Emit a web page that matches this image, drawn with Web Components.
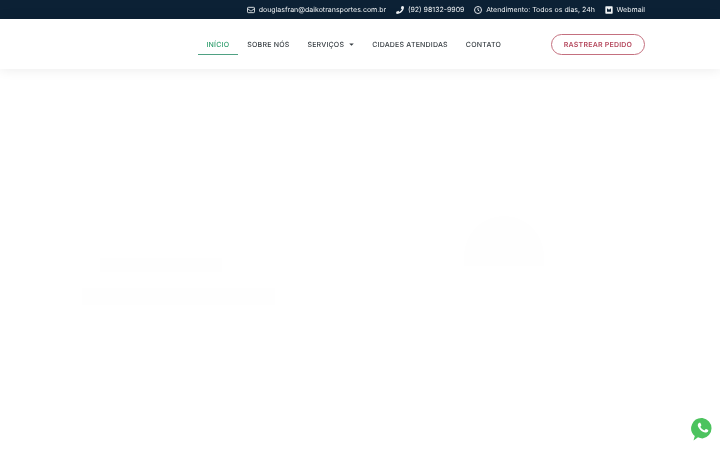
<!DOCTYPE html>
<html lang="pt-BR">
<head>
<meta charset="utf-8">
<title>Daiko Transportes</title>
<style>
    html, body { margin: 0; height: 100%; background: #fff; overflow: hidden; }
    body { font-family: "Inter", "Liberation Sans", sans-serif; text-rendering: geometricPrecision; }
</style>
</head>
<body>
<site-topbar>
    <top-item icon="mail">douglasfran@daikotransportes.com.br</top-item>
    <top-item icon="phone">(92) 98132-9909</top-item>
    <top-item icon="clock">Atendimento: Todos os dias, 24h</top-item>
    <top-item icon="webmail">Webmail</top-item>
</site-topbar>
<site-header>
    <nav-link active>INÍCIO</nav-link>
    <nav-link>SOBRE NÓS</nav-link>
    <nav-link caret>SERVIÇOS</nav-link>
    <nav-link>CIDADES ATENDIDAS</nav-link>
    <nav-link>CONTATO</nav-link>
    <track-button slot="action">RASTREAR PEDIDO</track-button>
</site-header>
<hero-ghost></hero-ghost>
<whats-float></whats-float>

<script>
const topIcons = {
    mail: '<svg width="8" height="8" viewBox="0 0 24 24" fill="none" stroke="currentColor" stroke-width="2.6"><rect x="1.500" y="4" width="21" height="16" rx="2.500"/><path d="M2 8l8 6.200c1.200.9 2.800.9 4 0L22 8"/></svg>',
    phone: '<svg width="8" height="8" viewBox="0 0 24 24" fill="currentColor"><path d="M23 17l-5.300-2.300c-.5-.2-1-.1-1.300.3l-2.300 2.900C10.500 16.100 7.900 13.500 6.100 9.900L9 7.600c.4-.3.5-.8.3-1.300L7 1C6.800.5 6.200.2 5.700.3L.9 1.400C.4 1.500 0 2 0 2.500 0 14.400 9.600 24 21.500 24c.5 0 1-.4 1.100-.9l1.100-4.800c.1-.5-.2-1.100-.7-1.300z" transform="matrix(-1 0 0 1 24 0)"/></svg>',
    clock: '<svg width="8" height="8" viewBox="0 0 24 24" fill="none" stroke="currentColor" stroke-width="2.800"><circle cx="12" cy="12" r="10.500"/><path d="M12 6v6.500l4 2.500"/></svg>',
    webmail: '<svg width="8" height="8" viewBox="0 0 24 24"><path fill="currentColor" fill-rule="evenodd" d="M3 1h18a2 2 0 0 1 2 2v18a2 2 0 0 1-2 2H3a2 2 0 0 1-2-2V3a2 2 0 0 1 2-2zm3 6v10h12V7l-6 4.500z"/></svg>'
};

class SiteTopbar extends HTMLElement {
    constructor() {
        super();
        this.attachShadow({mode: 'open'}).innerHTML = `
        <style>
            :host {
                display: flex;
                justify-content: flex-end;
                align-items: center;
                gap: 9.700px;
                box-sizing: border-box;
                height: 19px;
                padding-right: 75px;
                background: #0c2135;
                color: #f0f3f5;
            }
        </style>
        <slot></slot>`;
    }
}

class TopItem extends HTMLElement {
    constructor() {
        super();
        this.attachShadow({mode: 'open'}).innerHTML = `
        <style>
            :host {
                display: inline-flex;
                align-items: center;
                gap: 4px;
                font-size: 7.030px;
                line-height: 19px;
                white-space: nowrap;
                filter: blur(.25px);
            }
            .icon { display: flex; width: 8px; justify-content: center; }
        </style>
        <span class="icon">${topIcons[this.getAttribute('icon')] || ''}</span>
        <slot></slot>`;
    }
}

class SiteHeader extends HTMLElement {
    constructor() {
        super();
        this.attachShadow({mode: 'open'}).innerHTML = `
        <style>
            :host {
                display: flex;
                align-items: center;
                box-sizing: border-box;
                height: 50px;
                padding: 0 75px 0 197.500px;
                background: #fff;
                box-shadow: 0 0 12px rgba(0, 0, 0, .09);
                position: relative;
            }
            nav { display: flex; align-items: center; flex: 1; }
        </style>
        <nav><slot></slot></nav>
        <slot name="action"></slot>`;
    }
}

class NavLink extends HTMLElement {
    constructor() {
        super();
        const caret = this.hasAttribute('caret')
            ? '<svg class="caret" width="5" height="3" viewBox="0 0 6 4"><path d="M0 .5h6L3 3.800z" fill="currentColor"/></svg>'
            : '';
        this.attachShadow({mode: 'open'}).innerHTML = `
        <style>
            :host {
                display: flex;
                align-items: center;
                gap: 5px;
                box-sizing: border-box;
                height: 22px;
                padding: 1px 9px 0;
                font-size: 7.030px;
                font-weight: 500;
                letter-spacing: .2px;
                color: #343b40;
                white-space: nowrap;
                border-bottom: 1px solid transparent;
                filter: blur(.25px);
            }
            :host([active]) {
                color: #2b9c6a;
                border-bottom-color: #4fa183;
            }
        </style>
        <slot></slot>${caret}`;
    }
}

class TrackButton extends HTMLElement {
    constructor() {
        super();
        this.attachShadow({mode: 'open'}).innerHTML = `
        <style>
            :host {
                display: flex;
                align-items: center;
                justify-content: center;
                box-sizing: border-box;
                width: 94px;
                height: 21px;
                border: 1px solid #c4707f;
                border-radius: 11px;
                font-size: 7.030px;
                font-weight: 600;
                letter-spacing: .2px;
                color: #b5485d;
                white-space: nowrap;
                filter: blur(.25px);
            }
        </style>
        <slot></slot>`;
    }
}

// the barely visible fade-in content of the hero, under the header
class HeroGhost extends HTMLElement {
    constructor() {
        super();
        this.attachShadow({mode: 'open'}).innerHTML = `
        <style>
            :host {
                display: flex;
                justify-content: space-between;
                align-items: flex-start;
                padding: 147px 176px 0 82px;
            }
            .copy { display: flex; flex-direction: column; align-items: flex-start; gap: 16px; padding-top: 42px; }
            .copy i { display: block; background: #fefefe; }
            .copy i:first-child { width: 122px; height: 14px; margin-left: 18px; }
            .copy i:last-child { width: 193px; height: 17px; }
            .shape { width: 80px; height: 50px; border-radius: 40px 40px 0 0; background: #fefefe; }
        </style>
        <div class="copy"><i></i><i></i></div>
        <div class="shape"></div>`;
    }
}

class WhatsFloat extends HTMLElement {
    constructor() {
        super();
        this.attachShadow({mode: 'open'}).innerHTML = `
        <style>
            :host {
                position: fixed;
                left: 691px;
                top: 416px;
                width: 23px;
                height: 25px;
                display: block;
                filter: blur(.3px);
            }
            svg { display: block; }
        </style>
        <svg width="23" height="25" viewBox="0 0 23 25">
            <path fill="#4cc35e" d="M11.500 2a10.500 10.300 0 0 1 0 20.400c-1.600 0-3.100-.4-4.500-1.100L2.500 24.500l1.300-4.500a10.500 10.300 0 0 1 7.700-18z"/>
            <path fill="#fff" d="M8.500 6.300c-.3 0-.8.100-1.200.6-.4.500-1.200 1.300-1.200 3 0 1.800 1.300 3.500 1.500 3.700.2.300 2.500 4 6.200 5.400 3 1.200 3.600.9 4.300.9.700-.1 2-.8 2.300-1.700.3-.8.300-1.500.2-1.700l-2.900-1.500c-.3-.1-.6-.2-.9.200l-1.200 1.500c-.2.300-.5.300-.8.100-1.800-.9-3.700-2.300-5-4.700-.2-.3 0-.5.200-.7l1-1.300c.1-.3.100-.5 0-.7L9.900 6.900c-.3-.6-.6-.6-.9-.6z" transform="translate(2.400 2.200) scale(.72)"/>
        </svg>`;
    }
}

customElements.define('site-topbar', SiteTopbar);
customElements.define('top-item', TopItem);
customElements.define('site-header', SiteHeader);
customElements.define('nav-link', NavLink);
customElements.define('track-button', TrackButton);
customElements.define('hero-ghost', HeroGhost);
customElements.define('whats-float', WhatsFloat);
</script>
</body>
</html>
